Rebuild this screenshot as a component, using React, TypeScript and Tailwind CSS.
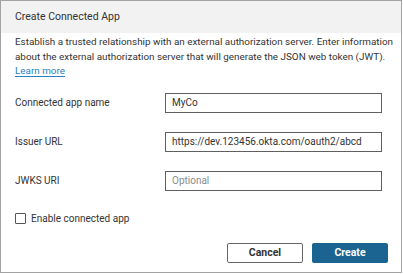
export default function App() {
  return (
    <div className="w-[403px] h-[274px] bg-white" style={{ fontFamily: "Roboto, 'Noto Sans', sans-serif" }}>
      <div className="h-[273px] w-[402px] border border-[#a3a3a3] flex flex-col text-[#333333] text-[10px]">
        {/* header */}
        <div className="h-[32px] shrink-0 bg-[#f2f2f2] flex items-center px-[14px] text-[10.5px]">
          Create Connected App
        </div>

        {/* description */}
        <div className="pl-[14px] mt-[2px] leading-[14.5px] text-[9.9px] whitespace-nowrap shrink-0">
          <p>
            Establish a trusted relationship with an external authorization server. Enter information
            <br />
            about the external authorization server that will generate the JSON web token (JWT).
          </p>
          <a className="text-[#2a7fbf] underline underline-offset-2">Learn more</a>
        </div>

        {/* fields */}
        <div className="flex flex-col gap-[19px] mt-[14px] pl-[14px] pr-[19px] shrink-0">
          <div className="flex items-center">
            <label className="w-[150px]">Connected app name</label>
            <div className="flex-1 h-[20px] border border-[#5f5f5f] flex items-center px-[6px]">MyCo</div>
          </div>
          <div className="flex items-center">
            <label className="w-[150px]">Issuer URL</label>
            <div className="flex-1 h-[20px] border border-[#5f5f5f] flex items-center px-[6px]">
              https://dev.123456.okta.com/oauth2/abcd
            </div>
          </div>
          <div className="flex items-center">
            <label className="w-[150px]">JWKS URI</label>
            <div className="flex-1 h-[20px] border border-[#5f5f5f] flex items-center px-[6px] text-[#8c8c8c]">
              Optional
            </div>
          </div>
        </div>

        {/* checkbox */}
        <div className="flex items-center gap-[5px] mt-[21px] pl-[14px] h-[14px] shrink-0">
          <div className="w-[11px] h-[11px] border border-[#555555] rounded-[1px]" />
          <span>Enable connected app</span>
        </div>

        {/* buttons */}
        <div className="flex justify-end gap-[9px] mt-[17px] pr-[13px] shrink-0">
          <button className="w-[76px] h-[20px] border border-[#666666] rounded-[2px] text-[10.5px] font-bold text-[#333333] bg-white">
            Cancel
          </button>
          <button className="w-[76px] h-[20px] rounded-[2px] text-[10.5px] font-bold text-white bg-[#1b6391]">
            Create
          </button>
        </div>
      </div>
    </div>
  );
}
